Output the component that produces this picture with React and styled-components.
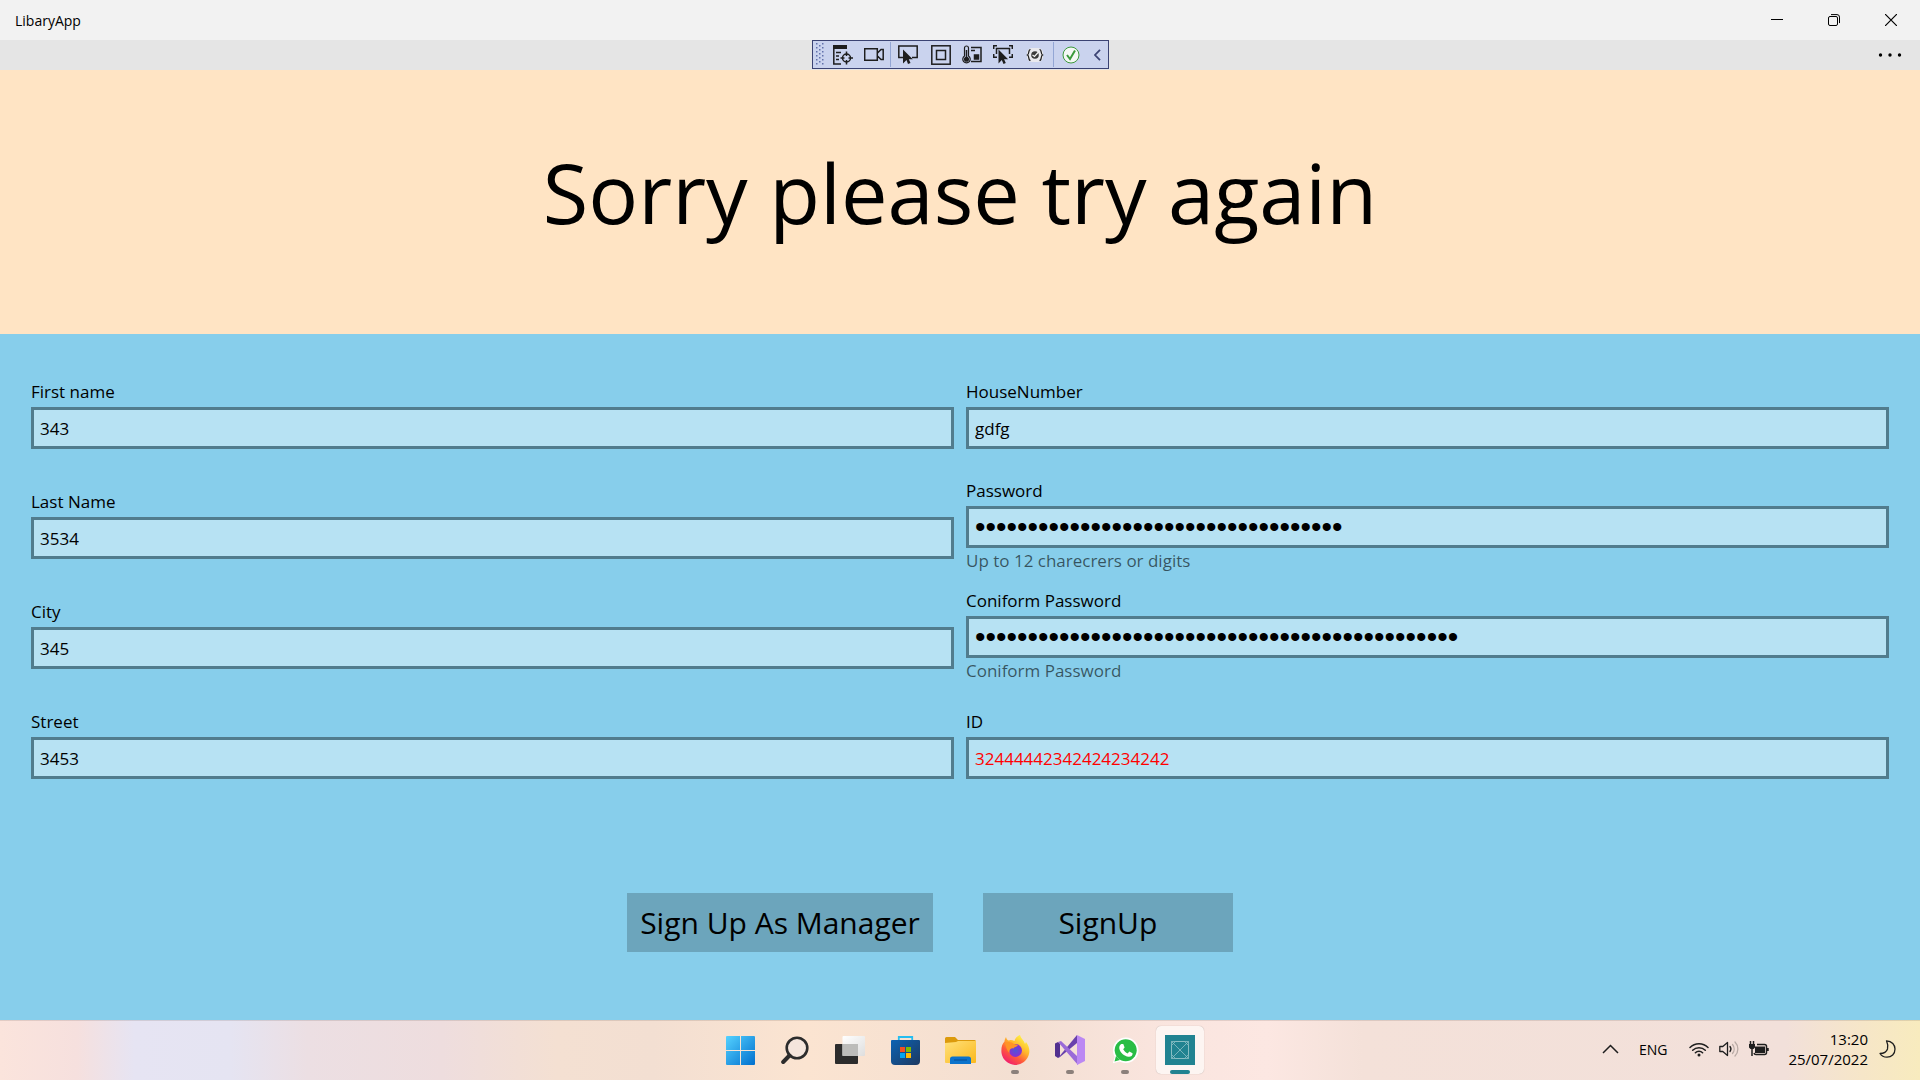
import React, { useState } from "react";
import styled, { createGlobalStyle, css } from "styled-components";

const GlobalStyle = createGlobalStyle`
  *, *::before, *::after { box-sizing: border-box; }
  body {
    margin: 0;
    color: #000;
    font-family: "Open Sans", "Noto Sans", sans-serif;
    font-size: 17px;
  }
  button, input { font: inherit; color: inherit; }
  svg { display: block; }
`;

const Screen = styled.div`
  min-height: 100vh;
  display: flex;
  flex-direction: column;
`;

const TitleBar = styled.header`
  height: 40px;
  padding: 0 1px 0 15px;
  display: flex;
  align-items: center;
  justify-content: space-between;
  background: #f2f2f2;
  font-size: 14px;
`;

const WindowButtons = styled.div`
  display: flex;
  align-self: stretch;
`;

const WindowButton = styled.button`
  width: 57px;
  padding: 0;
  border: 0;
  background: transparent;
  display: grid;
  place-items: center;
`;

const CommandBar = styled.div`
  height: 30px;
  display: grid;
  grid-template-columns: 1fr auto 1fr;
  align-items: start;
  background: #e5e5e5;
`;

const DebugTools = styled.div`
  grid-column: 2;
  height: 29px;
  display: flex;
  align-items: center;
  background: #cad3ee;
  border: 1px solid #3b4373;
`;

const ToolButton = styled.button`
  width: ${(p) => p.$width || 31}px;
  height: 27px;
  padding: 0;
  border: 0;
  background: transparent;
  display: grid;
  place-items: center;
`;

const ToolDivider = styled.span`
  width: 1px;
  height: 25px;
  background: #93a6d4;
`;

const MoreButton = styled.button`
  justify-self: end;
  width: 60px;
  height: 30px;
  padding: 0;
  border: 0;
  background: transparent;
  display: grid;
  place-items: center;
`;

const Banner = styled.section`
  height: 264px;
  display: grid;
  place-items: center;
  padding-bottom: 20px;
  background: #ffe4c4;
`;

const BannerTitle = styled.h1`
  margin: 0;
  font-size: 83px;
  font-weight: 400;
  line-height: 116px;
`;

const SignUpForm = styled.form`
  flex: 1;
  padding: 35px 31px 68px;
  display: flex;
  flex-direction: column;
  justify-content: space-between;
  background: #87ceeb;
`;

const Fields = styled.div`
  display: grid;
  grid-template-columns: 1fr 1fr;
  grid-template-rows: repeat(4, 91px);
  grid-auto-flow: column;
  align-items: center;
  gap: 19px 12px;
`;

const Field = styled.div`
  display: flex;
  flex-direction: column;
`;

const FieldLabel = styled.label`
  line-height: 24px;
  margin-bottom: 3px;
`;

const FieldInput = styled.input`
  width: 100%;
  height: 42px;
  padding: 0 6px;
  border: 3px solid #517c8d;
  border-radius: 0;
  outline: none;
  background: #b7e2f3;
  color: ${(p) => (p.$invalid ? "#ff0000" : "#000")};
  ${(p) =>
    p.type === "password" &&
    css`
      font-family: "Liberation Sans", sans-serif;
      font-size: 30px;
    `}
`;

const FieldHint = styled.span`
  line-height: 22px;
  padding-top: 2px;
  margin-bottom: -2px;
  color: rgba(0, 0, 0, 0.6);
`;

const Actions = styled.div`
  display: flex;
  justify-content: center;
  gap: 50px;
  padding-right: 60px;
`;

const ActionButton = styled.button`
  min-width: 250px;
  height: 59px;
  padding: 0 13px;
  border: 0;
  background: #6ca5bc;
  font-size: 30px;
`;

const Taskbar = styled.footer`
  height: 60px;
  display: grid;
  grid-template-columns: 1fr auto 1fr;
  align-items: center;
  box-shadow: inset 0 1px 0 rgba(90, 70, 60, 0.15);
  background: linear-gradient(90deg, #fbe4dc 0%, #f6e0de 4%, #e6e4f3 7%, #e5e4f2 12%, #ecdfe3 16%, #eeddde 23%, #f4e0d2 29%, #f3dfd2 34%, #fbe4d1 42%, #f3dfd2 53%, #fae5df 61%, #fce7e2 66%, #f4e1d9 71%, #f2e0da 93%, #f6e6c8 97%, #f8ebbe 100%);
`;

const TaskApps = styled.nav`
  grid-column: 2;
  display: flex;
  gap: 7px;
`;

const TaskApp = styled.button`
  position: relative;
  width: 48px;
  height: 48px;
  padding: 0;
  border: 0;
  border-radius: 5px;
  background: ${(p) => (p.$active ? "#fdf5f2" : "transparent")};
  box-shadow: ${(p) => (p.$active ? "0 0 1px rgba(0, 0, 0, 0.3)" : "none")};
  display: grid;
  place-items: center;

  &::after {
    content: "";
    display: ${(p) => (p.$running ? "block" : "none")};
    position: absolute;
    bottom: 0;
    left: 50%;
    transform: translateX(-50%);
    width: ${(p) => (p.$active ? 20 : 8)}px;
    height: 4px;
    border-radius: 2px;
    background: ${(p) => (p.$active ? "#218391" : "#8b807b")};
  }
`;

const Tray = styled.div`
  justify-self: end;
  display: flex;
  align-items: center;
  padding: 0 20px 2px 0;
  font-size: 14px;
`;

const TrayButton = styled.button`
  height: 48px;
  padding: 0 ${(p) => p.$pad || 0}px;
  border: 0;
  background: transparent;
  display: flex;
  align-items: center;
  gap: 10px;
`;

const Clock = styled.time`
  display: block;
  text-align: right;
  font-size: 15px;
  line-height: 20px;
`;

const line = { fill: "none", stroke: "#1e1e1e", strokeWidth: 1.5 };

const MinimizeIcon = () => (
  <svg width="12" height="12" viewBox="0 0 12 12"><path d="M0 5.500h12" stroke="#000" /></svg>
);
const RestoreIcon = () => (
  <svg width="12" height="12" viewBox="0 0 12 12" fill="none" stroke="#000">
    <rect x=".5" y="2.500" width="9" height="9" rx="1.500" />
    <path d="M3 .6h6a2.500 2.500 0 0 1 2.500 2.500v6" />
  </svg>
);
const CloseIcon = () => (
  <svg width="12" height="12" viewBox="0 0 12 12"><path d="M0 0l12 12M12 0L0 12" stroke="#000" strokeWidth="1.200" /></svg>
);
const MoreIcon = () => (
  <svg width="24" height="4" viewBox="0 0 24 4"><circle cx="2.500" cy="2" r="1.700" /><circle cx="12" cy="2" r="1.700" /><circle cx="21.500" cy="2" r="1.700" /></svg>
);

const GripIcon = () => (
  <svg width="8" height="23" viewBox="0 0 8 23" fill="#6272ab">
    {[0, 4, 8, 12, 16, 20].map((y) => (
      <g key={y}>
        <rect x="0" y={y} width="1.500" height="1.500" />
        <rect x="6" y={y} width="1.500" height="1.500" />
        {y < 20 && <rect x="3" y={y + 2} width="1.500" height="1.500" />}
      </g>
    ))}
  </svg>
);
const TreeIcon = () => (
  <svg width="20" height="20" viewBox="0 0 20 20" {...line}>
    <path d="M0 2h14" strokeWidth="4" />
    <path d="M.8 4v15H8M3 7.500h5M3 11h3M3 14.500h3" />
    <circle cx="13.500" cy="13" r="4" />
    <path d="M13.500 6.500v4.500M13.500 15v4.500M7.500 13h4M15.500 13H20" />
  </svg>
);
const CameraIcon = () => (
  <svg width="20" height="13" viewBox="0 0 20 13" {...line}><path d="M.7.700h12.600v11.600H.7zM13.500 5l3.500-3.500h2.200v10H17l-3.500-3.500" /></svg>
);
const SelectIcon = () => (
  <svg width="20" height="20" viewBox="0 0 20 20"><path d="M5 12.500H.8V1h18.400v11.500H14" {...line} /><path d="M5 4.500v14l3.500-3.500 1.500 4 2.500-1-1.700-3.800h4z" fill="#1e1e1e" /></svg>
);
const LayoutIcon = () => (
  <svg width="20" height="20" viewBox="0 0 20 20" {...line}><rect x=".8" y=".8" width="18.400" height="18.400" /><rect x="5.500" y="5.500" width="9" height="9" /></svg>
);
const ThermoIcon = () => (
  <svg width="20" height="19" viewBox="0 0 20 19" {...line}>
    <path d="M2.500 11V3a2 2 0 0 1 4 0v8a3.700 3.700 0 1 1-4 0z" strokeWidth="1.200" />
    <circle cx="4.500" cy="14.200" r="1.800" fill="#1e1e1e" /><path d="M4.500 5v8M9 2.500h10v14H9" />
    <path d="M9 5.500h4M12.500 10h4v4h-4z" fill="#1e1e1e" />
  </svg>
);
const TrackIcon = () => (
  <svg width="20" height="20" viewBox="0 0 20 20"><path d="M.7 4V.7H4M16 .7h3.300V4M.7 9v3.300H4M19.300 9v3.300H16M3.500 9V3.500h13V9" {...line} /><path d="M5.500 4.500v14l3.300-3.500 1.700 4 2.300-1-1.700-3.800h4z" fill="#1e1e1e" /></svg>
);
const ReloadIcon = () => (
  <svg width="18" height="14" viewBox="0 0 18 14" {...line} strokeWidth="1.200">
    <rect x="1" y="0" width="16" height="14" rx="5" fill="#e9e9ed" stroke="none" />
    <path d="M4.500 1.500C2 1.500 3.500 6 1.500 7 3.500 8 2 12.500 4.500 12.500M13.500 1.500C16 1.500 14.500 6 16.500 7 14.500 8 16 12.500 13.500 12.500" />
    <circle cx="9" cy="7" r="3.800" fill="#3a3a3a" stroke="none" /><path d="M6.500 7l2 1.500L12.500 4" stroke="#f4f4f4" />
  </svg>
);
const CheckIcon = () => (
  <svg width="18" height="18" viewBox="0 0 18 18" fill="#f4f8f4" stroke="#3c9a3c"><circle cx="9" cy="9" r="8" /><path d="M5 9l3 4 5-8.500" fill="none" strokeWidth="2" /></svg>
);
const CollapseIcon = () => (
  <svg width="7" height="12" viewBox="0 0 7 12"><path d="M6 .8L1 6l5 5.200" fill="none" stroke="#3b4373" strokeWidth="1.800" /></svg>
);

const StartIcon = () => (
  <svg width="29" height="29" viewBox="0 0 29 29">
    <defs><linearGradient id="start" gradientUnits="userSpaceOnUse" x1="0" y1="0" x2="29" y2="29"><stop stopColor="#55d2ff" /><stop offset="1" stopColor="#006fce" /></linearGradient></defs>
    <path fill="url(#start)" d="M1 0h13v14H0V1a1 1 0 0 1 1-1zM15 0h13a1 1 0 0 1 1 1v13H15zM0 15h14v14H1a1 1 0 0 1-1-1zM15 15h14v13a1 1 0 0 1-1 1H15z" />
  </svg>
);
const SearchIcon = () => (
  <svg width="28" height="29" viewBox="0 0 28 29" fill="none" stroke="#2c2c2c" strokeLinecap="round"><circle cx="16" cy="12" r="10.300" fill="#f4e5dc" strokeWidth="2.600" /><path d="M8.500 19.500L2.200 26" strokeWidth="4" /></svg>
);
const TaskViewIcon = () => (
  <svg width="30" height="28" viewBox="0 0 30 28">
    <defs><linearGradient id="front" x2="1" y2="1"><stop stopColor="#fff" /><stop offset="1" stopColor="#dedede" /></linearGradient></defs>
    <rect y="8" width="23" height="20" rx="1" fill="#2c2c2c" /><rect x="7.500" width="22.500" height="20" rx="1" fill="url(#front)" /><path d="M7.500 8H23v12H7.500z" fill="#bcbcba" />
  </svg>
);
const StoreIcon = () => (
  <svg width="29" height="29" viewBox="0 0 29 29">
    <defs><linearGradient id="bag" x2="1" y2="1"><stop stopColor="#0c63b4" /><stop offset="1" stopColor="#1d3960" /></linearGradient></defs>
    <path d="M7.800 6V1h13.400v5" fill="none" stroke="#25bdf0" strokeWidth="1.800" />
    <path d="M1 4h27a1 1 0 0 1 1 1v20a4 4 0 0 1-4 4H4a4 4 0 0 1-4-4V5a1 1 0 0 1 1-1z" fill="url(#bag)" />
    <path d="M9 11h5v5H9z" fill="#f25022" /><path d="M15 11h5v5h-5z" fill="#7fba00" /><path d="M9 17h5v5H9z" fill="#00a4ef" /><path d="M15 17h5v5h-5z" fill="#ffb900" />
  </svg>
);
const FolderIcon = () => (
  <svg width="31" height="27" viewBox="0 0 31 27">
    <defs><linearGradient id="folder" x2="1" y2="1"><stop stopColor="#ffe07a" /><stop offset="1" stopColor="#fbb91d" /></linearGradient></defs>
    <path d="M0 1.500A1.500 1.500 0 0 1 1.500 0H10l3 3h16.500A1.500 1.500 0 0 1 31 4.500V10H0z" fill="#dc9a0c" /><path d="M0 6l11-1 2-1h18v21a1 1 0 0 1-1 1H1a1 1 0 0 1-1-1z" fill="url(#folder)" />
    <path d="M5 27v-5a2.500 2.500 0 0 1 2.500-2.500h16A2.500 2.500 0 0 1 26 22v5z" fill="#0b73cc" /><path d="M9 23h13" stroke="#084c91" />
  </svg>
);
const FirefoxIcon = () => (
  <svg width="29" height="30" viewBox="0 0 29 30">
    <defs>
      <linearGradient id="fox" x1=".8" y1=".1" x2=".2" y2=".95"><stop stopColor="#fff044" /><stop offset=".35" stopColor="#ffb52b" /><stop offset=".65" stopColor="#ff5a3a" /><stop offset="1" stopColor="#f01a72" /></linearGradient>
      <radialGradient id="globe"><stop stopColor="#4e55d7" /><stop offset="1" stopColor="#8a2fce" /></radialGradient>
    </defs>
    <path d="M19 0c1 4 4 5 5 9l1-2c3 4 4 8 3 12a14 14 0 0 1-27.500-1C0 13 1 9 3.500 6.500c0-1 .5-3 1.500-4.500.5 2 1 3 2.500 3.500 2-1 4-.5 6 .5C14 3.500 16 1 19 0z" fill="url(#fox)" />
    <circle cx="14.500" cy="15.500" r="6.500" fill="url(#globe)" /><path d="M4 8c3-2 7-1 9 1l4 1c-1 2-4 2-4.500 3.500C9.500 12.500 8 15 8.500 18 6 16 5 12 4 8z" fill="#ff9425" />
  </svg>
);
const VisualStudioIcon = () => (
  <svg width="30" height="30" viewBox="0 0 30 30">
    <path d="M0 8.500L3 7l2 1.500v13L3 23l-3-2z" fill="#52308f" /><path d="M3 23L22 0v8L5 22z" fill="#6941ac" />
    <path d="M3 7l3-1 17 16v8z" fill="#9a6ad8" /><path d="M22 0l8 4v22l-8 4z" fill="#bb88f3" />
  </svg>
);
const WhatsAppIcon = () => (
  <svg width="27" height="27" viewBox="0 0 27 27">
    <path d="M13.500.5a12.800 12.800 0 1 1-6 24L.8 26.300l1.900-6.500A12.800 12.800 0 0 1 13.500.5z" fill="#fff" /><circle cx="13.700" cy="13.300" r="11" fill="#29bd45" /><path d="M4 19l-1.500 5.500L8 23z" fill="#29bd45" />
    <path d="M9.300 7l2 .1 1.300 3.300-1.400 1.800c1 2 2.500 3.300 4.500 4.200l1.600-1.800 3.300 1.600c.2 2.500-2 3.700-4 3.500-4.500-.7-8.500-4.200-9.300-8.300C7 9.500 8 7.500 9.300 7z" fill="#fff" />
  </svg>
);
const LibraryIcon = () => (
  <svg width="30" height="30" viewBox="0 0 30 30"><path d="M0 0h30v30H0z" fill="#218391" /><path d="M6.500 6.500h17v17h-17zM6.500 6.500l17 17M23.500 6.500l-17 17M10.500 6.500h9l4 4v9l-4 4h-9l-4-4v-9z" fill="none" stroke="#8fc0c6" strokeWidth=".8" /></svg>
);

const ChevronUpIcon = () => (
  <svg width="17" height="10" viewBox="0 0 17 10"><path d="M1 9l7.500-7.500L16 9" {...line} /></svg>
);
const WifiIcon = () => (
  <svg width="20" height="15" viewBox="0 0 20 15" {...line} strokeLinecap="round"><path d="M1 5.500a12.500 12.500 0 0 1 18 0M3.700 8.300a8.800 8.800 0 0 1 12.600 0M6.400 10.800a5 5 0 0 1 7.200 0" /><circle cx="10" cy="13" r="1.500" fill="#1e1e1e" stroke="none" /></svg>
);
const SpeakerIcon = () => (
  <svg width="20" height="16" viewBox="0 0 20 16" {...line} strokeWidth="1.300" strokeLinecap="round" strokeLinejoin="round"><path d="M.8 5.500h3L8.500 1.500v13L3.800 10.500h-3zM11 5.500a4 4 0 0 1 0 5" /><path d="M13.500 3.500a7 7 0 0 1 0 9M16 1a10 10 0 0 1 0 14" stroke="#b9aba6" /></svg>
);
const BatteryIcon = () => (
  <svg width="20" height="16" viewBox="0 0 20 16" {...line}><path d="M8 3.500h7.500a2 2 0 0 1 2 2v6a2 2 0 0 1-2 2H7a2 2 0 0 1-2-1.500M19 7v3" /><path d="M6 5.500h10v6.500H6zM0 3h6v3.500L4.500 8h-3L0 6.500z" fill="#1e1e1e" stroke="none" /><path d="M1.500 0v3M4.500 0v3M3 8v7" /></svg>
);
const MoonIcon = () => (
  <svg width="17" height="18" viewBox="0 0 17 18" {...line} strokeWidth="1.300" strokeLinejoin="round"><path d="M7.500.8C13 1 16 5 16 9c0 5-3.500 8.200-8 8.200-3 0-5.500-1.200-7-3.700 3.500 0 6.500-1.500 7.500-4.500.8-3 .2-5.500-1-8.200z" /></svg>
);

const fields = [
  { id: "firstName", label: "First name", value: "343" },
  { id: "lastName", label: "Last Name", value: "3534" },
  { id: "city", label: "City", value: "345" },
  { id: "street", label: "Street", value: "3453" },
  { id: "houseNumber", label: "HouseNumber", value: "gdfg" },
  { id: "password", label: "Password", value: "x".repeat(35), type: "password", hint: "Up to 12 charecrers or digits" },
  { id: "confirmPassword", label: "Coniform Password", value: "x".repeat(46), type: "password", hint: "Coniform Password" },
  { id: "idNumber", label: "ID", value: "32444442342424234242", invalid: true },
];

const tools = [
  { name: "Go to Live Visual Tree", Icon: TreeIcon, width: 31 },
  { name: "Record", Icon: CameraIcon, width: 31 },
  { divider: true },
  { name: "Select Element", Icon: SelectIcon, width: 35 },
  { name: "Display Layout Adorners", Icon: LayoutIcon, width: 31 },
  { name: "Show Performance", Icon: ThermoIcon, width: 31 },
  { name: "Track Focused Element", Icon: TrackIcon, width: 30 },
  { name: "Scan Accessibility", Icon: ReloadIcon, width: 35 },
  { divider: true },
  { name: "Hot Reload", Icon: CheckIcon, width: 34 },
  { name: "Collapse", Icon: CollapseIcon, width: 20 },
];

const apps = [
  { name: "Start", Icon: StartIcon },
  { name: "Search", Icon: SearchIcon },
  { name: "Task View", Icon: TaskViewIcon },
  { name: "Microsoft Store", Icon: StoreIcon },
  { name: "File Explorer", Icon: FolderIcon },
  { name: "Firefox", Icon: FirefoxIcon, running: true },
  { name: "Visual Studio", Icon: VisualStudioIcon, running: true },
  { name: "WhatsApp", Icon: WhatsAppIcon, running: true },
  { name: "LibaryApp", Icon: LibraryIcon, running: true, active: true },
];

function FormField({ id, label, value: initial, type = "text", hint, invalid }) {
  const [value, setValue] = useState(initial);
  return (
    <Field>
      <FieldLabel htmlFor={id}>{label}</FieldLabel>
      <FieldInput id={id} type={type} value={value} $invalid={invalid} onChange={(e) => setValue(e.target.value)} />
      {hint && <FieldHint>{hint}</FieldHint>}
    </Field>
  );
}

export default function App() {
  return (
    <Screen>
      <GlobalStyle />
      <TitleBar>
        <span>LibaryApp</span>
        <WindowButtons>
          <WindowButton aria-label="Minimize"><MinimizeIcon /></WindowButton>
          <WindowButton aria-label="Restore"><RestoreIcon /></WindowButton>
          <WindowButton aria-label="Close"><CloseIcon /></WindowButton>
        </WindowButtons>
      </TitleBar>
      <CommandBar>
        <DebugTools>
          <ToolButton aria-label="Move toolbar" $width={15}><GripIcon /></ToolButton>
          {tools.map(({ name, Icon, width, divider }, i) =>
            divider ? <ToolDivider key={i} /> : <ToolButton key={i} aria-label={name} $width={width}><Icon /></ToolButton>
          )}
        </DebugTools>
        <MoreButton aria-label="More"><MoreIcon /></MoreButton>
      </CommandBar>
      <Banner>
        <BannerTitle>Sorry please try again</BannerTitle>
      </Banner>
      <SignUpForm onSubmit={(e) => e.preventDefault()}>
        <Fields>
          {fields.map((field) => <FormField key={field.id} {...field} />)}
        </Fields>
        <Actions>
          <ActionButton type="button">Sign Up As Manager</ActionButton>
          <ActionButton type="submit">SignUp</ActionButton>
        </Actions>
      </SignUpForm>
      <Taskbar>
        <TaskApps>
          {apps.map(({ name, Icon, running, active }) => (
            <TaskApp key={name} aria-label={name} $running={running} $active={active}><Icon /></TaskApp>
          ))}
        </TaskApps>
        <Tray>
          <TrayButton aria-label="Show hidden icons" $pad={10}><ChevronUpIcon /></TrayButton>
          <TrayButton $pad={10}>ENG</TrayButton>
          <TrayButton aria-label="Network, volume and battery" $pad={12}><WifiIcon /><SpeakerIcon /><BatteryIcon /></TrayButton>
          <TrayButton $pad={7}>
            <span><Clock>13:20</Clock><Clock>25/07/2022</Clock></span>
          </TrayButton>
          <TrayButton aria-label="Notifications" $pad={4}><MoonIcon /></TrayButton>
        </Tray>
      </Taskbar>
    </Screen>
  );
}
